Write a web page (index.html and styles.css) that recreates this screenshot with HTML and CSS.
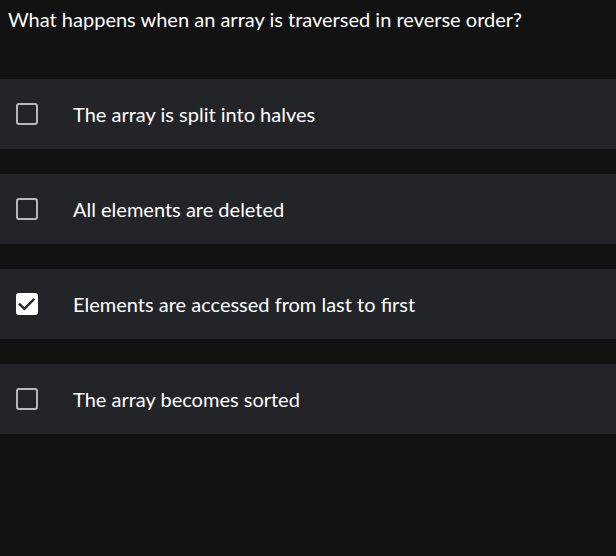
FILE: index.html
```html
<!DOCTYPE html>
<html>
<head>
<meta charset="utf-8">
<link rel="stylesheet" href="styles.css">
</head>
<body>
<div class="quiz">
  <h1 class="question">What happens when an array is traversed in reverse order?</h1>
  <div class="options">
    <label class="option">
      <span class="box"></span>
      <span class="label">The array is split into halves</span>
    </label>
    <label class="option">
      <span class="box"></span>
      <span class="label">All elements are deleted</span>
    </label>
    <label class="option">
      <span class="box checked">
        <svg viewBox="0 0 22 22" width="22" height="22"><path d="M3.8 11.4 L8.4 15.8 L17.6 6.6" fill="none" stroke="#23242a" stroke-width="2.4" stroke-linecap="square" stroke-linejoin="miter"/></svg>
      </span>
      <span class="label">Elements are accessed from last to first</span>
    </label>
    <label class="option">
      <span class="box"></span>
      <span class="label">The array becomes sorted</span>
    </label>
  </div>
</div>
</body>
</html>
```
FILE: styles.css
```css
html, body {
  margin: 0;
  padding: 0;
  background: #121212;
}
body {
  width: 616px;
  height: 556px;
  font-family: Lato, "Noto Sans", sans-serif;
  color: #ffffff;
}
.question {
  margin: 0;
  padding: 7px 8px 0 8px;
  font-size: 20px;
  font-weight: 400;
  line-height: 24px;
  height: 72px;
}
.options {
  display: flex;
  flex-direction: column;
  gap: 25px;
}
.option {
  display: flex;
  align-items: center;
  height: 70px;
  background: #23242a;
  padding-left: 16px;
}
.box {
  box-sizing: border-box;
  width: 22px;
  height: 22px;
  border: 2px solid #b8b8b8;
  border-radius: 3px;
  flex-shrink: 0;
  display: flex;
  align-items: center;
  justify-content: center;
}
.box.checked {
  background: #ffffff;
  border-color: #ffffff;
}
.box svg {
  display: block;
  flex-shrink: 0;
}
.label {
  margin-left: 35px;
  font-size: 20px;
  line-height: 24px;
}
```
